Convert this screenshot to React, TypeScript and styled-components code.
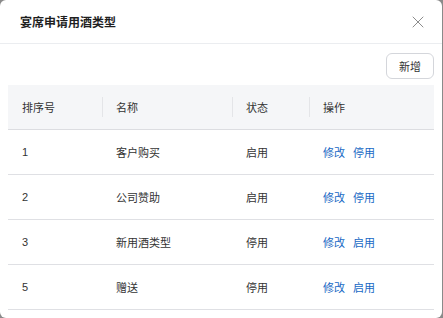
import React from "react";
import styled, { createGlobalStyle } from "styled-components";
import { X } from "lucide-react";

const GlobalStyle = createGlobalStyle`
  html, body {
    margin: 0;
    padding: 0;
    background: #8a8a8a;
  }
  body {
    font-family: "Liberation Sans", "Noto Sans CJK SC", sans-serif;
    color: #333;
  }
`;

const Modal = styled.div`
  width: 442px;
  height: 318px;
  background: #fff;
  border-radius: 6px;
  overflow: hidden;
  display: flex;
  flex-direction: column;
`;

const Header = styled.div`
  height: 43px;
  flex: none;
  display: flex;
  align-items: center;
  justify-content: space-between;
  padding: 0 14px 0 20px;
  border-bottom: 1px solid #ebedf0;
`;

const Title = styled.h2`
  margin: 0;
  font-size: 12px;
  font-weight: 700;
  color: #1f1f1f;
`;

const CloseBtn = styled.button`
  border: none;
  background: none;
  padding: 0;
  display: flex;
  color: #8c8c8c;
  cursor: pointer;
`;

const Body = styled.div`
  padding: 9px 8px 0;
`;

const Toolbar = styled.div`
  display: flex;
  justify-content: flex-end;
  margin-bottom: 6px;
`;

const AddButton = styled.button`
  width: 48px;
  height: 26px;
  border: 1px solid #d4d6db;
  border-radius: 6px;
  background: #fff;
  font-family: inherit;
  font-size: 11px;
  color: #333;
  padding: 0;
`;

const Row = styled.div<{ head?: boolean }>`
  box-sizing: border-box;
  display: grid;
  grid-template-columns: 94px 130px 77px 1fr;
  align-items: center;
  height: 45px;
  background: ${({ head }) => (head ? "#f5f6f8" : "#fff")};
  border-bottom: 1px solid ${({ head }) => (head ? "#dcdde1" : "#dfe0e4")};
  font-size: 11px;
`;

const Cell = styled.div<{ divider?: boolean }>`
  position: relative;
  padding-left: 14px;
  color: #333;

  ${({ divider }) =>
    divider
      ? `&::before {
    content: "";
    position: absolute;
    left: 0;
    top: -2px;
    bottom: -2px;
    width: 1px;
    background: #e4e5e8;
  }`
      : ""}
`;

const Actions = styled.div`
  display: flex;
  gap: 8px;
`;

const Link = styled.a`
  color: #1768c4;
  text-decoration: none;
  cursor: pointer;
`;

type Item = { sort: number; name: string; enabled: boolean };

const items: Item[] = [
  { sort: 1, name: "客户购买", enabled: true },
  { sort: 2, name: "公司赞助", enabled: true },
  { sort: 3, name: "新用酒类型", enabled: false },
  { sort: 5, name: "赠送", enabled: false },
];

const App = () => {
  return (
    <React.Fragment>
      <GlobalStyle />
      <Modal>
        <Header>
          <Title>宴席申请用酒类型</Title>
          <CloseBtn aria-label="关闭">
            <X size={20} strokeWidth={1.2} />
          </CloseBtn>
        </Header>
        <Body>
          <Toolbar>
            <AddButton>新增</AddButton>
          </Toolbar>
          <Row head>
            <Cell>排序号</Cell>
            <Cell divider>名称</Cell>
            <Cell divider>状态</Cell>
            <Cell divider>操作</Cell>
          </Row>
          {items.map((item) => (
            <Row key={item.sort}>
              <Cell>{item.sort}</Cell>
              <Cell>{item.name}</Cell>
              <Cell>{item.enabled ? "启用" : "停用"}</Cell>
              <Cell>
                <Actions>
                  <Link>修改</Link>
                  <Link>{item.enabled ? "停用" : "启用"}</Link>
                </Actions>
              </Cell>
            </Row>
          ))}
        </Body>
      </Modal>
    </React.Fragment>
  );
};

export default App;
